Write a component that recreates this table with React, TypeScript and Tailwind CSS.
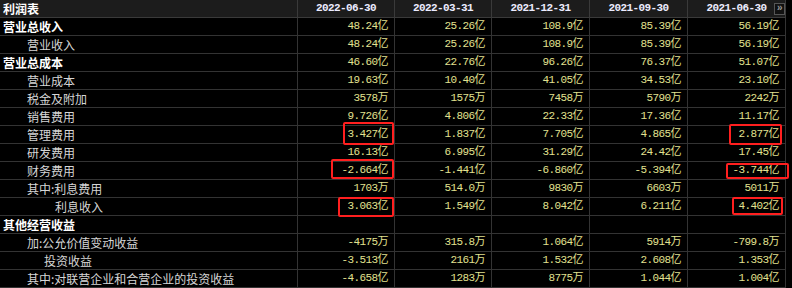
import clsx from "clsx";

const cn = clsx;

type Row = {
  label: string;
  indent: string;
  cat?: boolean;
  vals: string[];
};

const DATES = ["2022-06-30", "2022-03-31", "2021-12-31", "2021-09-30", "2021-06-30"];

const ROWS: Row[] = [
  { label: "营业总收入", indent: "pl-[3px]", cat: true, vals: ["48.24亿", "25.26亿", "108.9亿", "85.39亿", "56.19亿"] },
  { label: "营业收入", indent: "pl-[27px]", vals: ["48.24亿", "25.26亿", "108.9亿", "85.39亿", "56.19亿"] },
  { label: "营业总成本", indent: "pl-[3px]", cat: true, vals: ["46.60亿", "22.76亿", "96.26亿", "76.37亿", "51.07亿"] },
  { label: "营业成本", indent: "pl-[27px]", vals: ["19.63亿", "10.40亿", "41.05亿", "34.53亿", "23.10亿"] },
  { label: "税金及附加", indent: "pl-[27px]", vals: ["3578万", "1575万", "7458万", "5790万", "2242万"] },
  { label: "销售费用", indent: "pl-[27px]", vals: ["9.726亿", "4.806亿", "22.33亿", "17.36亿", "11.17亿"] },
  { label: "管理费用", indent: "pl-[27px]", vals: ["3.427亿", "1.837亿", "7.705亿", "4.865亿", "2.877亿"] },
  { label: "研发费用", indent: "pl-[27px]", vals: ["16.13亿", "6.995亿", "31.29亿", "24.42亿", "17.45亿"] },
  { label: "财务费用", indent: "pl-[27px]", vals: ["-2.664亿", "-1.441亿", "-6.860亿", "-5.394亿", "-3.744亿"] },
  { label: "其中:利息费用", indent: "pl-[27px]", vals: ["1703万", "514.0万", "9830万", "6603万", "5011万"] },
  { label: "利息收入", indent: "pl-[55px]", vals: ["3.063亿", "1.549亿", "8.042亿", "6.211亿", "4.402亿"] },
  { label: "其他经营收益", indent: "pl-[3px]", cat: true, vals: ["", "", "", "", ""] },
  { label: "加:公允价值变动收益", indent: "pl-[27px]", vals: ["-4175万", "315.8万", "1.064亿", "5914万", "-799.8万"] },
  { label: "投资收益", indent: "pl-[44px]", vals: ["-3.513亿", "2161万", "1.532亿", "2.608亿", "1.353亿"] },
  { label: "其中:对联营企业和合营企业的投资收益", indent: "pl-[27px]", vals: ["-4.658亿", "1283万", "8775万", "1.044亿", "1.004亿"] },
];

// hand-drawn red highlight boxes over the table
const MARKS = [
  "left-[343px] top-[122px] w-[51px] h-[23px]",
  "left-[331px] top-[159px] w-[63px] h-[20px]",
  "left-[338px] top-[197px] w-[56px] h-[20px]",
  "left-[729px] top-[124px] w-[53px] h-[21px]",
  "left-[726px] top-[163px] w-[63px] h-[16px]",
  "left-[732px] top-[197px] w-[51px] h-[18px]",
];

const GRID = "grid grid-cols-[297px_97px_97px_98px_98px_99px]";
const CJK = "font-['Noto_Sans_CJK_SC',sans-serif]";
const NUM = "font-['Liberation_Mono','Noto_Sans_CJK_SC',monospace] text-[11px] tracking-[-0.6px]";

export default function App() {
  return (
    <div className="w-[792px] h-[288px] bg-black overflow-hidden">
      <div className="relative w-[786px]">
        <div className={cn(GRID, "h-[18px] bg-[#1c1c1c] border-b border-[#3a3a3a]")}>
          <div className={cn(CJK, "pl-[3px] text-[12px] font-bold leading-[17px] text-white")}>利润表</div>
          {DATES.map((d, i) => (
            <div
              key={d}
              className={cn(
                NUM,
                "relative border-l border-[#3a3a3a] text-center font-bold leading-[17px] text-[#ececff]",
                i === 4 && "border-r",
              )}
            >
              {d}
              {i === 4 && (
                <span className="absolute right-0 top-[3px] flex h-[12px] w-[11px] items-center justify-center border border-[#555] bg-[#111] text-[10px] leading-none text-[#999]">
                  »
                </span>
              )}
            </div>
          ))}
        </div>

        {ROWS.map((r) => (
          <div key={r.label} className={cn(GRID, "h-[18px] border-b border-[#333]")}>
            <div
              className={cn(
                CJK,
                r.indent,
                "text-[12px] leading-[17px] whitespace-nowrap",
                r.cat ? "font-bold text-white" : "text-[#d6d6d6]",
              )}
            >
              {r.label}
            </div>
            {r.vals.map((v, i) => (
              <div
                key={i}
                className={cn(
                  NUM,
                  "border-l border-[#333] pr-[6px] text-right leading-[17px] text-[#e2e290]",
                  i === 4 && "border-r",
                )}
              >
                {v}
              </div>
            ))}
          </div>
        ))}

        {MARKS.map((m) => (
          <div key={m} className={cn("absolute rounded-[2px] border-2 border-[#ff1f1f]", m)} />
        ))}
      </div>
    </div>
  );
}
